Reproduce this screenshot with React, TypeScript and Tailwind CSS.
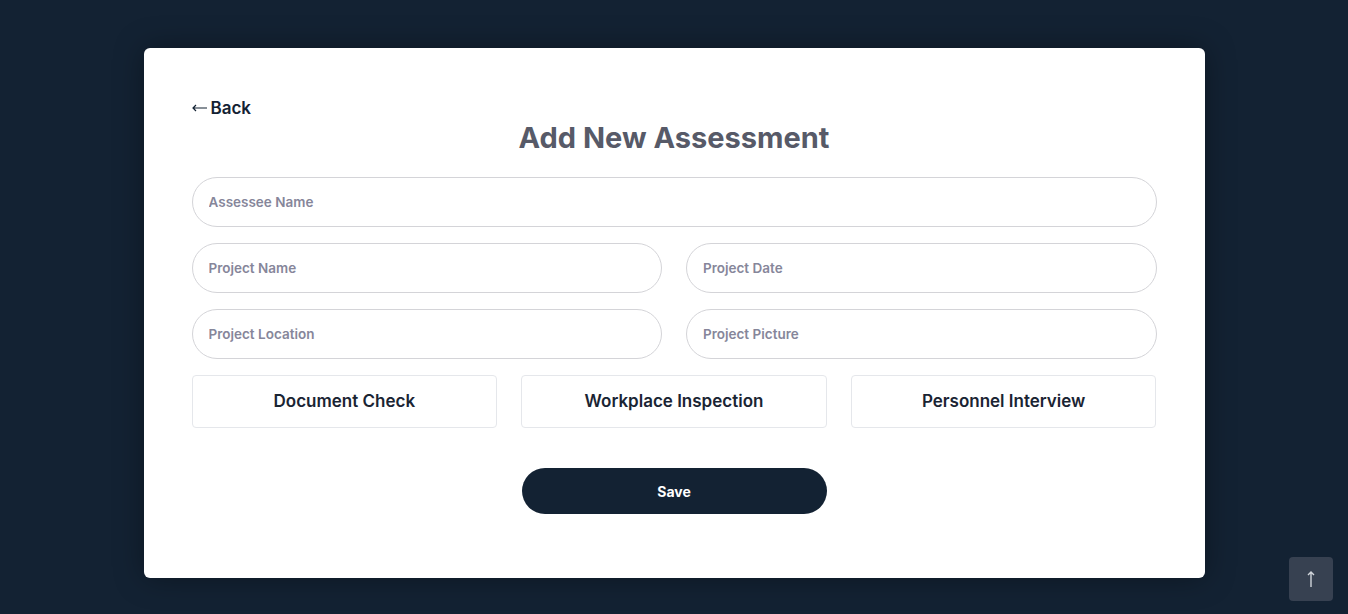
import React from "react";

export default function App() {
  const font = { fontFamily: "Inter, 'Noto Sans', sans-serif" };
  const inputCls =
    "h-[50px] w-full rounded-full border border-[#d4d4d8] px-4 text-[13.5px] font-semibold placeholder:text-[#86869a] outline-none";
  return (
    <div className="min-h-[614px] w-full bg-[#132233] pt-12 pb-9 relative" style={font}>
      <div className="mx-auto w-[1061px] rounded-md bg-white px-12 pt-[49px] pb-[64px] shadow-[0_0_30px_rgba(0,0,0,0.35)]">
        <button className="flex items-center gap-[4px] text-[17px] font-semibold text-[#132233] leading-[22px]">
          <svg width="15" height="8" viewBox="0 0 15 8" fill="none" stroke="#132233" strokeWidth="1.2">
            <path d="M15 4H1M4 1L1 4L4 7" />
          </svg>
          <span>Back</span>
        </button>
        <h1 className="mt-[2px] text-center text-[29px] font-bold leading-[34px] text-[#575a68]">
          Add New Assessment
        </h1>
        <div className="mt-[22px] flex flex-col gap-4">
          <input placeholder="Assessee Name" className={inputCls} />
          <div className="grid grid-cols-2 gap-6">
            <input placeholder="Project Name" className={inputCls} />
            <input placeholder="Project Date" className={inputCls} />
          </div>
          <div className="grid grid-cols-2 gap-6">
            <input placeholder="Project Location" className={inputCls} />
            <input placeholder="Project Picture" className={inputCls} />
          </div>
          <div className="grid grid-cols-3 gap-6">
            {["Document Check", "Workplace Inspection", "Personnel Interview"].map((t) => (
              <button
                key={t}
                className="h-[53px] rounded-[4px] border border-[#e5e7eb] text-[17px] font-semibold text-[#1a2433]"
              >
                {t}
              </button>
            ))}
          </div>
        </div>
        <div className="mt-[40px] flex justify-center">
          <button className="h-[46px] w-[305px] rounded-full bg-[#132233] text-[14px] font-bold text-white">
            Save
          </button>
        </div>
      </div>
      <button className="absolute right-[15px] bottom-[13px] flex h-[44px] w-[44px] items-center justify-center rounded-[4px] bg-[#374151]">
        <svg width="8" height="16" viewBox="0 0 8 16" fill="none" stroke="#d1d5db" strokeWidth="1.4">
          <path d="M4 16V1M1 4L4 1L7 4" />
        </svg>
      </button>
    </div>
  );
}
